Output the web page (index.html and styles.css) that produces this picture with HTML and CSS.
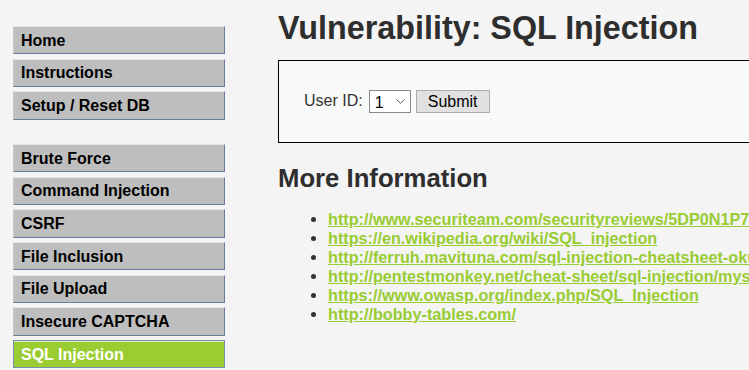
FILE: index.html
```html
<!DOCTYPE html>
<html lang="en">
<head>
<meta charset="utf-8">
<title>Vulnerability: SQL Injection</title>
<link rel="stylesheet" href="styles.css">
</head>
<body>
<div class="page">
  <nav class="menu">
    <ul class="menu-group">
      <li><a class="menu-item" href="#">Home</a></li>
      <li><a class="menu-item" href="#">Instructions</a></li>
      <li><a class="menu-item" href="#">Setup / Reset DB</a></li>
    </ul>
    <ul class="menu-group">
      <li><a class="menu-item" href="#">Brute Force</a></li>
      <li><a class="menu-item" href="#">Command Injection</a></li>
      <li><a class="menu-item" href="#">CSRF</a></li>
      <li><a class="menu-item" href="#">File Inclusion</a></li>
      <li><a class="menu-item" href="#">File Upload</a></li>
      <li><a class="menu-item" href="#">Insecure CAPTCHA</a></li>
      <li><a class="menu-item selected" href="#">SQL Injection</a></li>
    </ul>
  </nav>
  <main class="main">
    <h1 class="title">Vulnerability: SQL Injection</h1>
    <div class="vuln-box">
      <form class="id-form" action="#" method="get">
        <label class="id-label" for="uid">User ID:</label>
        <span class="select-wrap">
          <select id="uid" class="id-select" name="id">
            <option>1</option><option>2</option><option>3</option><option>4</option><option>5</option>
          </select>
          <svg class="chevron" width="9" height="5" viewBox="0 0 9 5"><path d="M0.5 0.5 L4.5 4.3 L8.5 0.5" fill="none" stroke="#555" stroke-width="1"/></svg>
        </span>
        <button class="submit" type="submit">Submit</button>
      </form>
    </div>
    <h2 class="subtitle">More Information</h2>
    <ul class="links">
      <li><a href="#">http://www.securiteam.com/securityreviews/5DP0N1P76E.html</a></li>
      <li><a href="#">https://en.wikipedia.org/wiki/SQL_injection</a></li>
      <li><a href="#">http://ferruh.mavituna.com/sql-injection-cheatsheet-oku/</a></li>
      <li><a href="#">http://pentestmonkey.net/cheat-sheet/sql-injection/mysql-sql-injection-cheat-sheet</a></li>
      <li><a href="#">https://www.owasp.org/index.php/SQL_Injection</a></li>
      <li><a href="#">http://bobby-tables.com/</a></li>
    </ul>
  </main>
</div>
</body>
</html>
```
FILE: styles.css
```css
html, body {
  margin: 0;
  padding: 0;
  overflow: hidden;
  background: #f4f4f4;
  font-family: "Liberation Sans", Arial, sans-serif;
  color: #333;
}

.page {
  display: flex;
  align-items: flex-start;
  gap: 53px;
  padding-left: 13px;
  width: 1400px;
}

.menu {
  width: 212px;
  flex-shrink: 0;
  padding-top: 26px;
}

.menu-group {
  list-style: none;
  margin: 0 0 24.33px 0;
  padding: 0;
}

.menu-group li {
  margin-bottom: 4.33px;
}

.menu-item {
  display: block;
  box-sizing: border-box;
  height: 28.33px;
  padding: 4.6px 0 0 7px;
  font-size: 16px;
  line-height: 18.4px;
  font-weight: bold;
  color: #000;
  text-decoration: none;
  white-space: nowrap;
  background: #bebebe;
  border-top: 1px solid #e6e6e6;
  border-left: 1px solid #c8c8c8;
  border-right: 1px solid #6a7aa0;
  border-bottom: 1px solid #6a7aa0;
}

.menu-item.selected {
  background: #9acd32;
  color: #fff;
  border: 1px solid #7d8db0;
  box-shadow: inset 0 1px 0 #e4eed0;
}

.main {
  width: 900px;
  flex-shrink: 0;
  padding-top: 10px;
}

.title {
  margin: 0;
  font-size: 32.3px;
  line-height: 36.8px;
  font-weight: bold;
  color: #2e2e2e;
}

.vuln-box {
  margin-top: 13px;
  height: 83px;
  box-sizing: border-box;
  border: 1px solid #000;
  background: #f8f9f9;
  padding-left: 25px;
  display: flex;
  align-items: center;
}

.id-form {
  display: flex;
  align-items: center;
  margin: 0;
  padding-top: 1px;
}

.id-label {
  font-size: 16px;
  color: #333;
  margin-right: 6px;
  position: relative;
  top: -1px;
}

.select-wrap {
  position: relative;
  display: block;
  width: 42px;
  height: 23px;
  margin-right: 5px;
}

.id-select {
  appearance: none;
  -webkit-appearance: none;
  width: 42px;
  height: 23px;
  box-sizing: border-box;
  border: 1px solid #8a8a8a;
  border-radius: 0;
  background: #fff;
  margin: 0;
  padding: 1px 0 0 5px;
  font-family: "Liberation Sans", Arial, sans-serif;
  font-size: 16px;
  color: #000;
}

.chevron {
  position: absolute;
  left: 27px;
  top: 9px;
  pointer-events: none;
}

.submit {
  width: 74px;
  height: 23px;
  box-sizing: border-box;
  margin: 0;
  padding: 0;
  border: 1px solid #adadad;
  border-radius: 0;
  background: #e1e1e1;
  font-family: "Liberation Sans", Arial, sans-serif;
  font-size: 16px;
  color: #000;
}

.subtitle {
  margin: 21.7px 0 0 0;
  font-size: 25.7px;
  line-height: 29.6px;
  font-weight: bold;
  color: #2e2e2e;
}

.links {
  margin: 16px 0 0 0;
  padding-left: 50px;
  list-style: disc;
  font-size: 16.2px;
  line-height: 19.07px;
  color: #333;
}

.links li {
  white-space: nowrap;
}

.links a {
  color: #99cc33;
  font-weight: bold;
  text-decoration: underline;
}
```
